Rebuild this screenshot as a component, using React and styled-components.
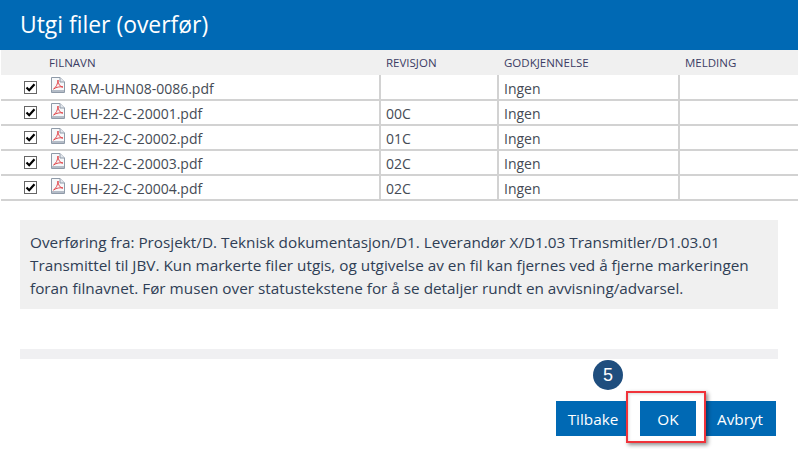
import React from "react";
import styled, { createGlobalStyle } from "styled-components";

const GlobalStyle = createGlobalStyle`
  html, body {
    margin: 0;
    padding: 0;
    background: #fff;
  }
  body {
    font-family: "Open Sans", "Noto Sans", "Liberation Sans", sans-serif;
    color: #454b55;
  }
`;

const Page = styled.div`
  position: relative;
  width: 798px;
  height: 449px;
  overflow: hidden;
  background: #fff;
`;
const Header = styled.h1`
  margin: 0;
  height: 50px;
  padding-left: 20px;
  background: #0069b4;
  color: #fff;
  font-size: 22.9px;
  font-weight: 400;
  line-height: 50px;
`;
const Table = styled.table`
  width: 797px;
  margin-left: 1px;
  border-collapse: collapse;
  table-layout: fixed;
`;
const HeadCell = styled.th`
  box-sizing: border-box;
  height: 25px;
  padding: 0 0 0 ${(props) => props.$pad ?? 6}px;
  background: #f0f0f0;
  color: #3c3c64;
  font-size: 11.5px;
  font-weight: 400;
  text-align: left;
  width: ${(props) => props.$width}px;
`;
const Row = styled.tr`
  height: 25px;
  border-bottom: 2px solid #d2d2d2;
`;
const Cell = styled.td`
  padding: 3px 0 0 5px;
  border-left: ${(props) => (props.$plain ? "none" : "2px solid #d2d2d2")};
  font-size: 14px;
  line-height: 20px;
  white-space: nowrap;
`;
const CheckCell = styled.td`
  padding: 0 0 0 23px;
`;
const Check = styled.span`
  display: block;
  width: 11px;
  height: 11px;
  border: 1px solid #666;
  background: #fff;
  svg {
    display: block;
  }
`;
const FileName = styled.div`
  display: flex;
  align-items: center;
  gap: 5px;
  margin-left: -3px;
  svg {
    margin-top: -7px;
    flex: none;
  }
`;
const Info = styled.p`
  box-sizing: border-box;
  height: 89px;
  margin: 19px 20px 0;
  padding: 11px 10px;
  background: #f0f0f0;
  color: #2f3e55;
  font-size: 15.3px;
  line-height: 23px;
`;
const Divider = styled.div`
  height: 10px;
  margin: 40px 20px 0;
  background: #f0f0f2;
`;
const Actions = styled.div`
  display: flex;
  justify-content: flex-end;
  padding: 42px 22px 0 0;
`;
const Button = styled.button`
  box-sizing: border-box;
  width: ${(props) => props.$width}px;
  height: 35px;
  margin-left: ${(props) => props.$gap || 0}px;
  padding: 0 0 0 ${(props) => props.$shift || 0}px;
  border: none;
  background: #0069b4;
  color: #fff;
  font-family: inherit;
  font-size: 15.3px;
`;
const Badge = styled.div`
  position: absolute;
  left: 593px;
  top: 360px;
  width: 30px;
  height: 30px;
  border-radius: 50%;
  background: #1f4e7e;
  color: #fff;
  font-family: "Liberation Sans", sans-serif;
  font-size: 18px;
  line-height: 30px;
  text-align: center;
`;
const Highlight = styled.div`
  position: absolute;
  left: 626px;
  top: 391px;
  width: 76px;
  height: 48px;
  border: 2px solid #f0333a;
  box-shadow: 2px 2px 4px rgba(0, 0, 0, 0.45), inset 1px 1px 3px rgba(0, 0, 0, 0.15);
`;

const files = [
  { name: "RAM-UHN08-0086.pdf", rev: "" },
  { name: "UEH-22-C-20001.pdf", rev: "00C" },
  { name: "UEH-22-C-20002.pdf", rev: "01C" },
  { name: "UEH-22-C-20003.pdf", rev: "02C" },
  { name: "UEH-22-C-20004.pdf", rev: "02C" },
];

function PdfIcon() {
  return (
    <svg width="14" height="16" viewBox="0 0 14 16">
      <path d="M.5 .5H9L13.5 5V15.5H.5Z" fill="#f6f8fa" stroke="#8f9aa8" />
      <path d="M9 .5V5H13.5" fill="#e4e8ee" stroke="#8f9aa8" />
      <rect x="1" y="13" width="12" height="2" fill="#b4bcc7" />
      <path
        d="M2.5 12C5 10.5 6.8 7 7 3C7.2 7 9 10 12 10C9 9.4 5.5 10 2.5 12Z"
        fill="none"
        stroke="#e0393e"
        strokeWidth="0.9"
      />
    </svg>
  );
}

function CheckMark() {
  return (
    <Check>
      <svg width="11" height="11" viewBox="0 0 11 11">
        <path d="M1.5 5.5L4.2 8.2L9.5 2.2" fill="none" stroke="#000" strokeWidth="2.2" />
      </svg>
    </Check>
  );
}

export default function App() {
  return (
    <Page>
      <GlobalStyle />
      <Header>Utgi filer (overfør)</Header>
      <Table>
        <thead>
          <tr>
            <HeadCell $width={48} />
            <HeadCell $width={331} $pad={0}>FILNAVN</HeadCell>
            <HeadCell $width={118}>REVISJON</HeadCell>
            <HeadCell $width={181}>GODKJENNELSE</HeadCell>
            <HeadCell>MELDING</HeadCell>
          </tr>
        </thead>
        <tbody>
          {files.map((file) => (
            <Row key={file.name}>
              <CheckCell>
                <CheckMark />
              </CheckCell>
              <Cell $plain>
                <FileName>
                  <PdfIcon />
                  {file.name}
                </FileName>
              </Cell>
              <Cell>{file.rev}</Cell>
              <Cell>Ingen</Cell>
              <Cell />
            </Row>
          ))}
        </tbody>
      </Table>
      <Info>
        Overføring fra: Prosjekt/D. Teknisk dokumentasjon/D1. Leverandør X/D1.03 Transmitler/D1.03.01
        Transmittel til JBV. Kun markerte filer utgis, og utgivelse av en fil kan fjernes ved å fjerne markeringen
        foran filnavnet. Før musen over statustekstene for å se detaljer rundt en avvisning/advarsel.
      </Info>
      <Divider />
      <Actions>
        <Button $width={70} $shift={4}>Tilbake</Button>
        <Button $width={56} $gap={14}>OK</Button>
        <Button $width={72} $gap={8}>Avbryt</Button>
      </Actions>
      <Badge>5</Badge>
      <Highlight />
    </Page>
  );
}
